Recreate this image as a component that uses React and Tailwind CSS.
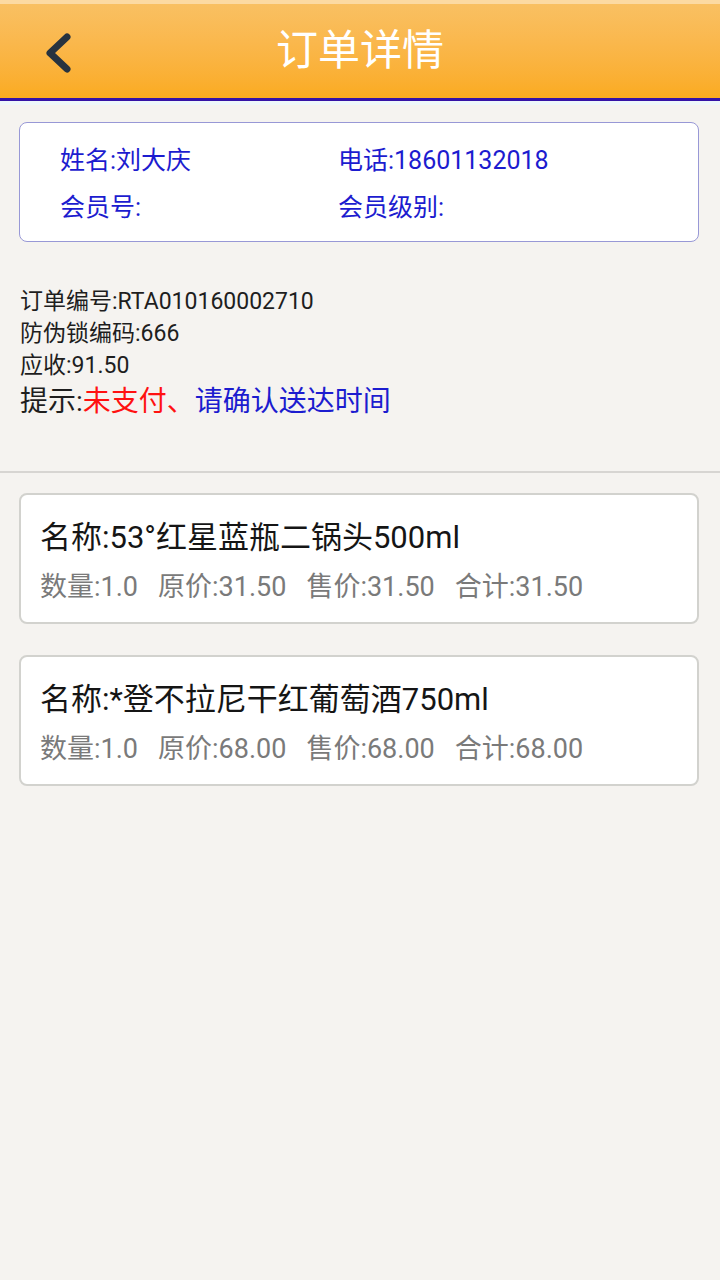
export default function App() {
  const items = [
    { name: "名称:53°红星蓝瓶二锅头500ml", qty: "1.0", orig: "31.50", sale: "31.50", total: "31.50" },
    { name: "名称:*登不拉尼干红葡萄酒750ml", qty: "1.0", orig: "68.00", sale: "68.00", total: "68.00" },
  ];
  return (
    <div className="min-h-[1280px] bg-[#f5f3f0] font-['Roboto','Noto_Sans_CJK_SC',sans-serif]">
      <div className="relative flex h-[101px] items-center justify-center border-t-4 border-b-[3px] border-t-[#fcdaa2] border-b-[#3512a6] bg-linear-to-b from-[#f9c062] to-[#fbab1e]">
        <svg className="absolute left-[40px] top-[24px]" width="40" height="48" viewBox="0 0 40 48">
          <path d="M27 9 L10 25 L27 41" fill="none" stroke="#27333f" strokeWidth="7" strokeLinecap="round" strokeLinejoin="round" />
        </svg>
        <div className="text-[42px] leading-none text-white">订单详情</div>
      </div>
      <div className="h-[4px] bg-[#eef7fa]" />

      <div className="ml-[19px] mt-[17px] h-[120px] w-[680px] rounded-[8px] border-[1.5px] border-[#9898d6] bg-white pl-[40px] pt-[14px] text-[25px] text-[#1c1ccf]">
        <div className="grid grid-cols-[278px_1fr]">
          <div className="leading-[47px]">姓名:刘大庆</div>
          <div className="leading-[47px]">电话:18601132018</div>
          <div className="leading-[47px]">会员号:</div>
          <div className="leading-[47px]">会员级别:</div>
        </div>
      </div>

      <div className="mt-[44px] px-[20px] text-[23px] leading-[32px] text-[#1e1e1e]">
        <div>订单编号:RTA010160002710</div>
        <div>防伪锁编码:666</div>
        <div>应收:91.50</div>
        <div className="text-[28px] leading-[40px]">
          提示:<span className="text-[#ff1111]">未支付、</span>
          <span className="text-[#1c1ccf]">请确认送达时间</span>
        </div>
      </div>

      <div className="mt-[49px] h-[2px] bg-[#d7d5d2]" />

      <div className="ml-[19px] mt-[20px] flex w-[680px] flex-col gap-[31px]">
        {items.map((it, i) => (
          <div key={i} className="h-[131px] rounded-[8px] border-2 border-[#d2d2ce] bg-white pl-[19px] pt-[21px]">
            <div className="text-[31px] leading-[44px] text-[#151515]">{it.name}</div>
            <div className="mt-[6px] flex gap-[20px] text-[27px] leading-[42px] text-[#7a7a7a]">
              <span>数量:{it.qty}</span>
              <span>原价:{it.orig}</span>
              <span>售价:{it.sale}</span>
              <span>合计:{it.total}</span>
            </div>
          </div>
        ))}
      </div>
    </div>
  );
}
